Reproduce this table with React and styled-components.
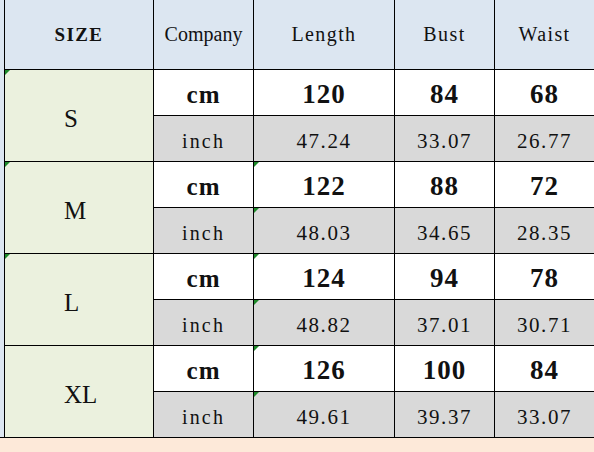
import React from 'react'
import styled, { createGlobalStyle } from 'styled-components';

const GlobalStyle = createGlobalStyle`
  html, body {
    margin: 0;
    padding: 0;
    background: #fde9d9;
    overflow: hidden;
  }
`;

// the sheet is a grid on black, the 1px gaps become the cell borders
const Sheet = styled.div`
  width: 594px;
  height: 452px;
  display: grid;
  grid-template-columns: 4px 148px 99px 140px 99px 1fr;
  grid-template-rows: 69px repeat(8, 45px) 1fr;
  gap: 1px;
  background: #000;
  overflow: hidden;
  font-family: "Liberation Serif", "Noto Sans CJK SC", serif;
  color: #111;
`;

const Strip = styled.div`
  grid-column: 1;
  grid-row: 1 / span 9;
  background: #dce6f1;
`;

const Footer = styled.div`
  grid-column: 1 / -1;
  background: #fde9d9;
`;

const Cell = styled.div`
  position: relative;
  display: flex;
  align-items: center;
  justify-content: ${p => p.$left ? 'flex-start' : 'center'};
  padding-top: ${p => p.$drop || 0}px;
  padding-left: ${p => p.$left || 0}px;
  box-sizing: border-box;
  background: ${p => p.$bg || '#fff'};
  grid-row: ${p => p.$span ? `span ${p.$span}` : 'auto'};

  &::before {
    content: '';
    display: ${p => p.$flag ? 'block' : 'none'};
    position: absolute;
    left: 0;
    top: 0;
    width: 0;
    height: 0;
    border-top: 5px solid #1e8a2a;
    border-right: 5px solid transparent;
  }
`;

const HeadText = styled.span`
  font-size: ${p => p.$big ? 19 : 20}px;
  font-weight: ${p => p.$big ? 700 : 400};
  letter-spacing: ${p => p.$tight ? 0 : 1.4}px;
`;

const SizeText = styled.span`
  font-size: 25px;
`;

const UnitText = styled.span`
  font-size: ${p => p.$bold ? 25 : 20}px;
  font-weight: ${p => p.$bold ? 700 : 400};
  letter-spacing: ${p => p.$bold ? 1 : 2.2}px;
`;

const Value = styled.span`
  font-size: ${p => p.$bold ? 27 : 21}px;
  font-weight: ${p => p.$bold ? 700 : 400};
  letter-spacing: ${p => p.$bold ? 1 : 1.6}px;
`;

const HEAD_BG = '#dce6f1';
const SIZE_BG = '#ebf1de';
const INCH_BG = '#d9d9d9';

const sizes = [
  { name: 'S', cm: [120, 84, 68], inch: ['47.24', '33.07', '26.77'], flag: true, lenFlag: false },
  { name: 'M', cm: [122, 88, 72], inch: ['48.03', '34.65', '28.35'], flag: true, lenFlag: true },
  { name: 'L', cm: [124, 94, 78], inch: ['48.82', '37.01', '30.71'], flag: true, lenFlag: true },
  { name: 'XL', cm: [126, 100, 84], inch: ['49.61', '39.37', '33.07'], flag: false, lenFlag: true },
];

function App() {
  return (
    <>
      <GlobalStyle />
      <Sheet>
        <Strip />
        <Cell $bg={HEAD_BG}><HeadText $big>SIZE</HeadText></Cell>
        <Cell $bg={HEAD_BG}><HeadText $tight>Company</HeadText></Cell>
        <Cell $bg={HEAD_BG}><HeadText>Length</HeadText></Cell>
        <Cell $bg={HEAD_BG}><HeadText>Bust</HeadText></Cell>
        <Cell $bg={HEAD_BG}><HeadText>Waist</HeadText></Cell>

        {sizes.map(s => (
          <React.Fragment key={s.name}>
            <Cell $bg={SIZE_BG} $span={2} $flag={s.flag} $drop={6} $left={59}>
              <SizeText>{s.name}</SizeText>
            </Cell>
            <Cell $drop={4}><UnitText $bold>cm</UnitText></Cell>
            {s.cm.map((v, i) => (
              <Cell key={i} $flag={i === 0 && s.lenFlag} $drop={4}>
                <Value $bold>{v}</Value>
              </Cell>
            ))}
            <Cell $bg={INCH_BG} $drop={6}><UnitText>inch</UnitText></Cell>
            {s.inch.map((v, i) => (
              <Cell key={i} $bg={INCH_BG} $flag={i === 0 && s.lenFlag} $drop={6}>
                <Value>{v}</Value>
              </Cell>
            ))}
          </React.Fragment>
        ))}

        <Footer />
      </Sheet>
    </>
  );
}

export default App
